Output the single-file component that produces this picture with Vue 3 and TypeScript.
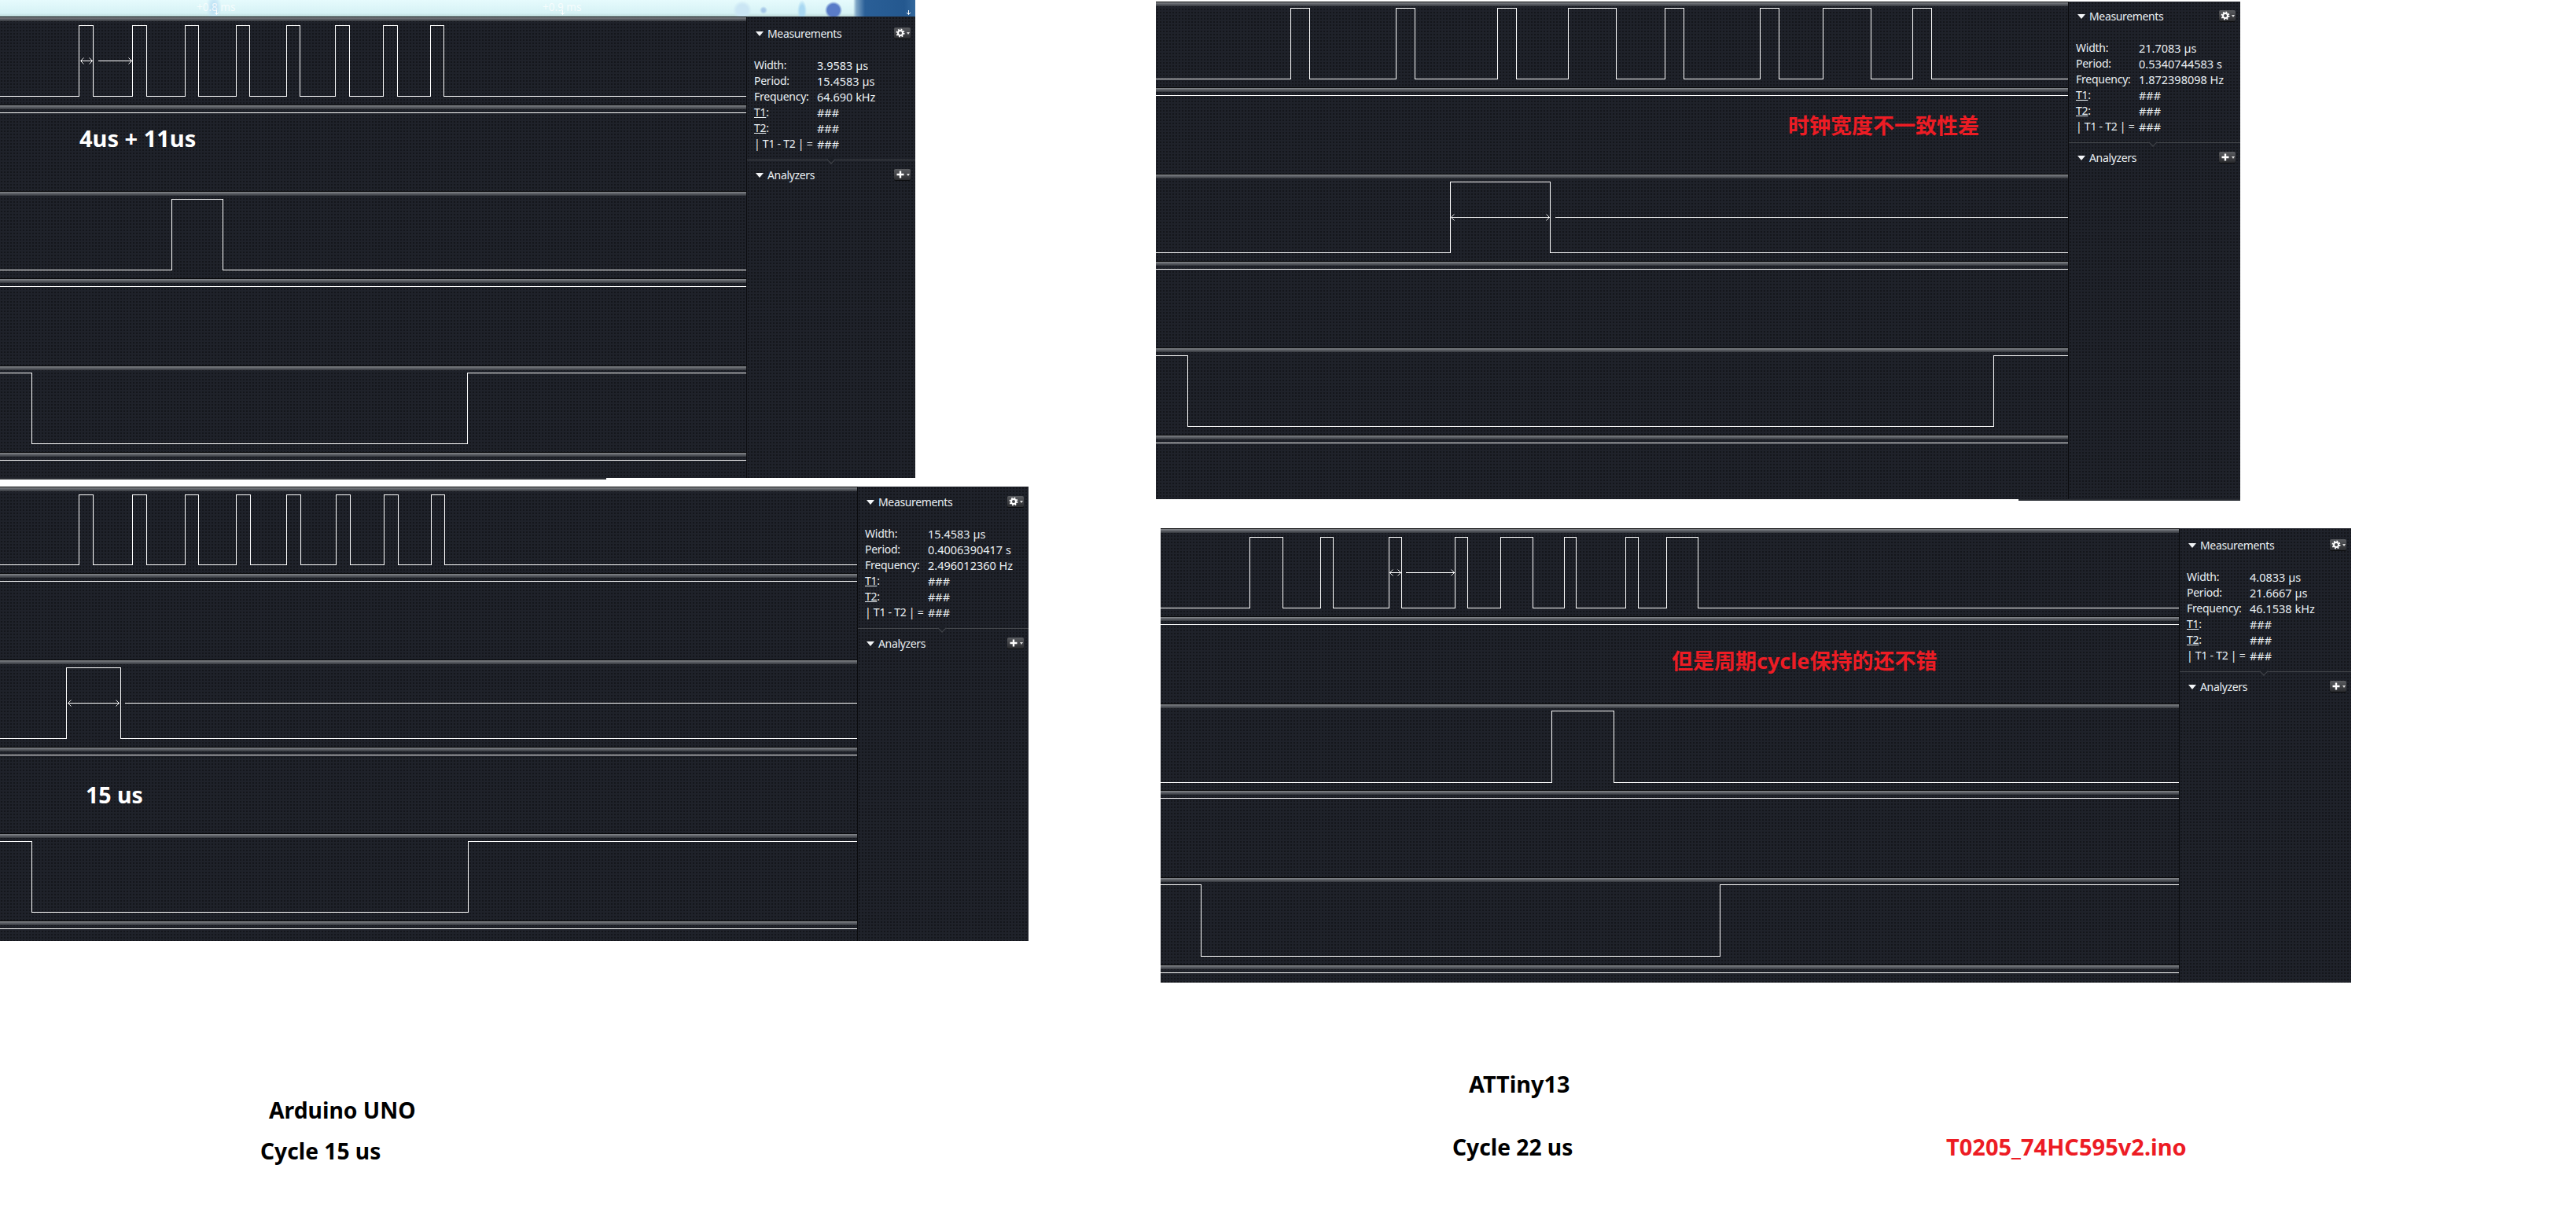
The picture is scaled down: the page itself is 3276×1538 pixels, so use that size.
<script setup lang="ts">
interface Row {
  h: number
  high?: number
  low?: number
  edges?: number[]
  startsHigh?: boolean
  line?: number
  marker?: Marker
}

interface Marker {
  y: number
  x1: number
  x2: number
  x3: number
  x4: number
  head: boolean
}

interface Capture {
  id: string
  left: number
  top: number
  width: number
  sideWidth: number
  sideTop: number
  banner?: boolean
  tail?: { from: number; width: number }
  rows: Row[]
  readings: [string, string, string]
}

const captures: Capture[] = [
  {
    id: 'uno-clock',
    left: 0,
    top: 0,
    width: 1164,
    sideWidth: 215,
    sideTop: 12,
    banner: true,
    tail: { from: 0, width: 771 },
    readings: ['3.9583 µs', '15.4583 µs', '64.690 kHz'],
    rows: [
      {
        h: 112,
        high: 11,
        low: 101,
        edges: [100, 118, 168, 186, 235, 252, 300, 317, 364, 381, 426, 444, 487, 505, 547, 564],
        marker: { y: 56, x1: 102, x2: 117, x3: 124, x4: 167, head: true }
      },
      { h: 110, line: 10 },
      { h: 111, high: 10, low: 100, edges: [218, 283] },
      { h: 111, line: 10 },
      { h: 110, high: 9, low: 99, edges: [40, 594], startsHigh: true },
      { h: 33, line: 10 }
    ]
  },
  {
    id: 'uno-period',
    left: 0,
    top: 619,
    width: 1308,
    sideWidth: 218,
    sideTop: 10,
    readings: ['15.4583 µs', '0.4006390417 s', '2.496012360 Hz'],
    rows: [
      {
        h: 110,
        high: 10,
        low: 99,
        edges: [100, 118, 168, 186, 235, 252, 300, 318, 364, 382, 427, 445, 488, 506, 548, 565]
      },
      { h: 110, line: 10 },
      {
        h: 111,
        high: 10,
        low: 100,
        edges: [84, 153],
        marker: { y: 55, x1: 86, x2: 151, x3: 158, x4: 1090, head: false }
      },
      { h: 110, line: 10 },
      { h: 111, high: 10, low: 100, edges: [40, 595], startsHigh: true },
      { h: 26, line: 10 }
    ]
  },
  {
    id: 'tiny-clock',
    left: 1470,
    top: 2,
    width: 1379,
    sideWidth: 219,
    sideTop: 9,
    tail: { from: 1097, width: 282 },
    readings: ['21.7083 µs', '0.5340744583 s', '1.872398098 Hz'],
    rows: [
      {
        h: 109,
        high: 8,
        low: 98,
        edges: [1641, 1665, 1775, 1799, 1904, 1928, 1994, 2055, 2117, 2141, 2238, 2262, 2318, 2379, 2432, 2456]
      },
      { h: 110, line: 10 },
      {
        h: 111,
        high: 10,
        low: 100,
        edges: [1844, 1971],
        marker: { y: 55, x1: 1845, x2: 1970, x3: 1977, x4: 2630, head: false }
      },
      { h: 110, line: 10 },
      { h: 111, high: 10, low: 100, edges: [1510, 2535], startsHigh: true },
      { h: 82, line: 10 }
    ]
  },
  {
    id: 'tiny-period',
    left: 1476,
    top: 672,
    width: 1514,
    sideWidth: 219,
    sideTop: 12,
    readings: ['4.0833 µs', '21.6667 µs', '46.1538 kHz'],
    rows: [
      {
        h: 112,
        high: 11,
        low: 101,
        edges: [1589, 1631, 1679, 1695, 1766, 1782, 1850, 1866, 1908, 1949, 1989, 2004, 2067, 2083, 2119, 2159],
        marker: { y: 56, x1: 1767, x2: 1781, x3: 1787, x4: 1849, head: true }
      },
      { h: 111, line: 10 },
      { h: 110, high: 9, low: 100, edges: [1973, 2052] },
      { h: 111, line: 10 },
      { h: 111, high: 9, low: 100, edges: [1527, 2187], startsHigh: true },
      { h: 23, line: 10 }
    ]
  }
]

const notes = [
  { text: '4us + 11us', left: 101, mid: 176, size: 29, color: '#fff' },
  { text: '15 us', left: 109, mid: 1011, size: 28.5, color: '#fff' },
  { text: '时钟宽度不一致性差', left: 2274, mid: 160, size: 27, color: '#ed1c24' },
  { text: '但是周期cycle保持的还不错', left: 2126, mid: 841, size: 27, color: '#ed1c24' },
  { text: 'Arduino UNO', left: 342, mid: 1412, size: 28.3, color: '#000' },
  { text: 'Cycle 15 us', left: 331, mid: 1464, size: 28.2, color: '#000' },
  { text: 'ATTiny13', left: 1868, mid: 1379, size: 28.8, color: '#000' },
  { text: 'Cycle 22 us', left: 1847, mid: 1459, size: 28.2, color: '#000' },
  { text: 'T0205_74HC595v2.ino', left: 2475, mid: 1459, size: 29, color: '#ed1c24' }
]

const bannerTicks = [272, 712, 1152]

function mainWidth(c: Capture) {
  return c.width - c.sideWidth
}

// square wave from the edge list, toggling level at every edge
function wave(c: Capture, r: Row) {
  const hi = (r.high ?? 0) + 0.5
  const lo = (r.low ?? 0) + 0.5
  let level = r.startsHigh ? hi : lo
  const pts = [`0,${level}`]
  for (const e of r.edges ?? []) {
    const x = e - c.left + 0.5
    pts.push(`${x},${level}`)
    level = level === hi ? lo : hi
    pts.push(`${x},${level}`)
  }
  pts.push(`${mainWidth(c)},${level}`)
  return pts.join(' ')
}

function mx(c: Capture, x: number) {
  return x - c.left + 0.5
}
</script>

<template>
  <div class="sheet">
    <section
      v-for="c in captures"
      :key="c.id"
      class="capture"
      :style="{ left: c.left + 'px', top: c.top + 'px', width: c.width + 'px' }"
    >
      <div v-if="c.banner" class="banner">
        <span class="tick" style="left: 250px">+0.8 ms</span>
        <span class="tick" style="left: 690px">+0.9 ms</span>
        <svg
          v-for="x in bannerTicks"
          :key="x"
          class="tick-arrow"
          :style="{ left: x + 'px' }"
          width="7"
          height="6"
          viewBox="0 0 7 6"
        >
          <path d="M3.5 0v5.5M1 3l2.5 2.5L6 3" stroke="#fff" stroke-width="1" fill="none" />
        </svg>
      </div>

      <div class="body">
        <div class="traces">
          <div v-for="(r, i) in c.rows" :key="i" class="row" :style="{ height: r.h + 'px' }">
            <div class="band"></div>
            <svg class="plot" :width="mainWidth(c)" :height="r.h">
              <line
                v-if="r.line !== undefined"
                x1="0"
                :x2="mainWidth(c)"
                :y1="r.line + 0.5"
                :y2="r.line + 0.5"
              />
              <polyline v-else :points="wave(c, r)" />
              <g v-if="r.marker" class="marker">
                <line :x1="mx(c, r.marker.x1)" :x2="mx(c, r.marker.x2)" :y1="r.marker.y + 0.5" :y2="r.marker.y + 0.5" />
                <polyline
                  class="head"
                  :points="`${mx(c, r.marker.x1) + 4},${r.marker.y - 3.5} ${mx(c, r.marker.x1)},${r.marker.y + 0.5} ${mx(c, r.marker.x1) + 4},${r.marker.y + 4.5}`"
                />
                <polyline
                  class="head"
                  :points="`${mx(c, r.marker.x2) - 4},${r.marker.y - 3.5} ${mx(c, r.marker.x2)},${r.marker.y + 0.5} ${mx(c, r.marker.x2) - 4},${r.marker.y + 4.5}`"
                />
                <line :x1="mx(c, r.marker.x3)" :x2="mx(c, r.marker.x4)" :y1="r.marker.y + 0.5" :y2="r.marker.y + 0.5" />
                <polyline
                  v-if="r.marker.head"
                  class="head"
                  :points="`${mx(c, r.marker.x4) - 4},${r.marker.y - 3.5} ${mx(c, r.marker.x4)},${r.marker.y + 0.5} ${mx(c, r.marker.x4) - 4},${r.marker.y + 4.5}`"
                />
              </g>
            </svg>
          </div>
        </div>

        <aside class="side" :style="{ width: c.sideWidth + 'px', paddingTop: c.sideTop + 'px' }">
          <header class="side-head">
            <i class="caret"></i>
            <span>Measurements</span>
            <button class="tool">
              <svg width="12" height="12" viewBox="0 0 12 12">
                <circle cx="6" cy="6" r="3" fill="none" stroke="#fff" stroke-width="2" />
                <circle cx="6" cy="6" r="4.6" fill="none" stroke="#fff" stroke-width="1.8" stroke-dasharray="1.8 1.81" />
              </svg>
              <i class="tool-caret"></i>
            </button>
          </header>
          <dl class="readings">
            <dt>Width:</dt>
            <dd>{{ c.readings[0] }}</dd>
            <dt>Period:</dt>
            <dd>{{ c.readings[1] }}</dd>
            <dt>Frequency:</dt>
            <dd>{{ c.readings[2] }}</dd>
            <dt><u>T1</u>:</dt>
            <dd>###</dd>
            <dt><u>T2</u>:</dt>
            <dd>###</dd>
            <dt>| T1 - T2 | =</dt>
            <dd>###</dd>
          </dl>
          <div class="divider"></div>
          <header class="side-head">
            <i class="caret"></i>
            <span>Analyzers</span>
            <button class="tool">
              <svg width="12" height="12" viewBox="0 0 12 12">
                <path d="M6 1.5v9M1.5 6h9" stroke="#fff" stroke-width="2.4" fill="none" />
              </svg>
              <i class="tool-caret"></i>
            </button>
          </header>
        </aside>
      </div>

      <div
        v-if="c.tail"
        class="tail"
        :style="{ marginLeft: c.tail.from + 'px', width: c.tail.width + 'px' }"
      ></div>
    </section>

    <p
      v-for="n in notes"
      :key="n.text"
      class="note"
      :style="{ left: n.left + 'px', top: n.mid - 20 + 'px', fontSize: n.size + 'px', color: n.color }"
    >
      {{ n.text }}
    </p>
  </div>
</template>

<style scoped>
.sheet {
  position: relative;
  width: 3276px;
  height: 1538px;
  overflow: hidden;
  background: #fff;
  font-family: "Noto Sans", "Noto Sans CJK SC", sans-serif;
}

.capture {
  position: absolute;
}

.banner {
  position: relative;
  height: 21px;
  background:
    linear-gradient(90deg, transparent 1085px, #7fa6c6 1089px, #2a5f97 1100px, #24588f 1150px, #34689c 1164px),
    radial-gradient(circle 11px at 1060px 13px, #5a7cc8 70%, transparent 100%),
    radial-gradient(ellipse 6px 14px at 1020px 14px, #a9d8f2 50%, transparent 100%),
    radial-gradient(circle 5px at 971px 13px, #a6c8e8 40%, transparent 100%),
    radial-gradient(circle 12px at 944px 13px, #cbe6f4 60%, transparent 100%),
    radial-gradient(ellipse 10px 18px at 272px 10px, #bfe2f5 30%, transparent 100%),
    linear-gradient(180deg, #e6fbfd, #d6f2f5 80%, #bcd8d8);
}

.tick {
  position: absolute;
  top: 0;
  color: #fff;
  opacity: 0.75;
  font-size: 13.5px;
  line-height: 18px;
}

.tick-arrow {
  position: absolute;
  top: 13px;
}

.body {
  display: flex;
  align-items: stretch;
}

.traces {
  flex: 1;
  min-width: 0;
  display: flex;
  flex-direction: column;
}

.row {
  position: relative;
  overflow: hidden;
  background:
    radial-gradient(circle, #14161b 1px, transparent 1.2px) 0 0 / 4px 4px,
    #1f222a;
}

.band {
  height: 6px;
  border-top: 1px solid #08090b;
  box-sizing: border-box;
  background: linear-gradient(180deg, #85888c, #55585e 55%, #34373d);
}

.plot {
  position: absolute;
  inset: 0;
  display: block;
  fill: none;
  stroke: #fff;
  stroke-width: 1;
}

.plot line,
.plot polyline {
  shape-rendering: crispEdges;
}

.plot .head {
  shape-rendering: auto;
  stroke-width: 0.9;
}

.side {
  box-sizing: border-box;
  flex: none;
  border-left: 1px solid #0b0c0f;
  color: #e9eff3;
  font-size: 14.5px;
  line-height: 20px;
  background:
    radial-gradient(circle, #14161b 1px, transparent 1.2px) 0 0 / 4px 4px,
    #1f222a;
}

.side-head {
  position: relative;
  display: flex;
  align-items: center;
  height: 20px;
  padding-left: 11px;
  gap: 5px;
  font-size: 14px;
  letter-spacing: -0.35px;
}

.caret {
  width: 0;
  height: 0;
  border-left: 5px solid transparent;
  border-right: 5px solid transparent;
  border-top: 6px solid #f2f4f6;
}

.tool {
  position: absolute;
  right: 6px;
  top: 2px;
  display: flex;
  align-items: center;
  justify-content: center;
  gap: 2px;
  width: 21px;
  height: 14px;
  padding: 0;
  border: none;
  border-radius: 2px;
  background: linear-gradient(180deg, #5a5c60, #2a2b2e);
  box-shadow: 0 1px 0 #0c0d0f;
}

.tool-caret {
  width: 0;
  height: 0;
  border-left: 2px solid transparent;
  border-right: 2px solid transparent;
  border-top: 3px solid #ddd;
}

.readings {
  display: grid;
  grid-template-columns: 80px 1fr;
  grid-auto-rows: 20px;
  margin: 20px 0 0;
  padding-left: 9px;
}

.readings dt,
.readings dd {
  margin: 0;
  white-space: nowrap;
}

.readings dt {
  font-size: 14px;
  letter-spacing: -0.25px;
}

.divider {
  position: relative;
  height: 1px;
  margin: 10px 0 9px;
  background: #44474c;
}

.divider::after {
  content: "";
  position: absolute;
  left: 103px;
  top: -4px;
  width: 7px;
  height: 7px;
  transform: rotate(45deg);
  border-right: 1px solid #44474c;
  border-bottom: 1px solid #44474c;
  background: #1c1f26;
}

.tail {
  height: 2px;
  background: #2a2d33;
}

.note {
  position: absolute;
  margin: 0;
  font-weight: 700;
  line-height: 40px;
  white-space: nowrap;
}
</style>

<style>
html,
body {
  margin: 0;
  background: #fff;
}
</style>
